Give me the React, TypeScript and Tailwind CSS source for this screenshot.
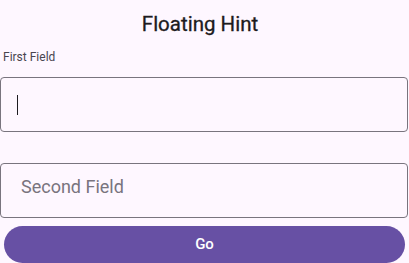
export default function App() {
  return (
    <div
      className="flex h-[263px] w-[409px] flex-col overflow-hidden bg-[#fef7ff]"
      style={{ fontFamily: "Roboto, 'Noto Sans', sans-serif" }}
    >
      <h1 className="mt-[10px] pr-[9px] text-center text-[20.5px] leading-[28px] text-[#1d1b20] [-webkit-text-stroke:0.3px_#1d1b20]">
        Floating Hint
      </h1>
      <label className="ml-[3px] mt-[11px] text-[12px] leading-[16px] text-[#49454f]">First Field</label>
      <div className="mt-[12px] flex h-[55px] w-[408px] items-center rounded-[4px] border border-[#79747e] px-[16px]">
        <span className="h-[20px] w-px bg-[#1d1b20]" />
      </div>
      <div className="mt-[31px] flex h-[55px] w-[408px] items-center rounded-[4px] border border-[#79747e] px-[20px] pb-[7px]">
        <span className="text-[18px] leading-[24px] text-[#79747e]">Second Field</span>
      </div>
      <button className="mx-[4px] mt-[8px] flex h-[37px] items-center justify-center rounded-full bg-[#6750a4] text-[15px] font-medium text-white">
        Go
      </button>
    </div>
  );
}
